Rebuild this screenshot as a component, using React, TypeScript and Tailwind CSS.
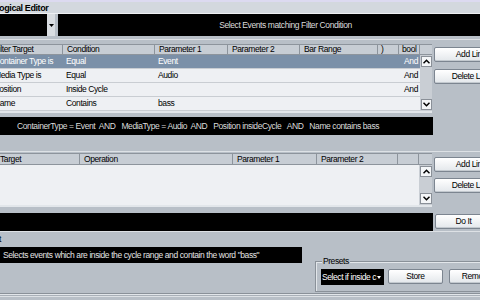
import React from "react";

const filterRows = [
  { target: "Container Type is", cond: "Equal", p1: "Event", bool: "And", selected: true },
  { target: "Media Type is", cond: "Equal", p1: "Audio", bool: "And" },
  { target: "Position", cond: "Inside Cycle", p1: "", bool: "And" },
  { target: "Name", cond: "Contains", p1: "bass", bool: "" },
];

function Chevron({ up }: { up?: boolean }) {
  return (
    <svg width="7" height="5" viewBox="0 0 7 5">
      <polyline
        points={up ? "0.5,4.2 3.5,1.2 6.5,4.2" : "0.5,0.8 3.5,3.8 6.5,0.8"}
        fill="none"
        stroke="#000"
        strokeWidth="1.5"
      />
    </svg>
  );
}

function ScrollBar() {
  return (
    <div className="flex h-full w-full flex-col justify-between bg-[#c9ced4] py-[1px] pl-[1px]">
      <div className="flex h-[11px] items-center justify-center border border-[#8a9098] bg-[#f4f6f8]">
        <Chevron up />
      </div>
      <div className="flex h-[11px] items-center justify-center border border-[#8a9098] bg-[#f4f6f8]">
        <Chevron />
      </div>
    </div>
  );
}

function Button({ label, className }: { label: string; className: string }) {
  return (
    <div
      className={`flex items-center justify-center rounded-[2px] border border-[#7c8590] bg-linear-to-b from-white to-[#e3e7eb] shadow-[inset_0_-1px_0_#c3c9cf] ${className}`}
    >
      {label}
    </div>
  );
}

function HeadCell({ label, w, pl = "pl-[4px]" }: { label: string; w: string; pl?: string }) {
  return (
    <div className={`flex h-full items-center border-r border-[#8d949c] ${w} ${pl} whitespace-nowrap`}>
      {label}
    </div>
  );
}

export default function App() {
  return (
    <div className="h-[300px] w-[480px] overflow-hidden bg-[#b8bfc7] font-['Liberation_Sans',Arial,sans-serif] text-[8.5px] tracking-[-0.4px] text-black">
      <div className="ml-[-7px] flex w-[520px] flex-col">
        {/* title */}
        <div className="h-[2px] bg-[#dcdaf0]" />
        <div className="h-[12px] border-b border-[#eef0f3] bg-[#d3d8de] pl-[1px] text-[9px] font-bold leading-[12px]">
          Logical Editor
        </div>

        {/* function + filter caption */}
        <div className="flex h-[22px] gap-[3px]">
          <div className="flex w-[62px]">
            <div className="w-[54px] bg-black" />
            <div className="flex w-[8px] items-center justify-center bg-[#d9dde1]">
              <svg width="5" height="3" viewBox="0 0 5 3">
                <polygon points="0,0 5,0 2.5,3" fill="#000" />
              </svg>
            </div>
          </div>
          <div className="flex flex-1 items-center justify-center bg-black text-[#dcdcdc]">
            Select Events matching Filter Condition
          </div>
        </div>
        <div className="h-[3px]" />
        <div className="h-[1px] bg-[#dde1e5]" />
        <div className="h-[4px]" />

        {/* filter table */}
        <div className="flex gap-[2px]">
          <div className="flex w-[439px] flex-col border-b-2 border-[#e2e6ea]">
            <div className="flex h-[11px] border-y border-[#8d949c] bg-[#c7cdd4]">
              <HeadCell label="Filter Target" w="w-[70px]" pl="pl-[1px]" />
              <HeadCell label="Condition" w="w-[92px]" />
              <HeadCell label="Parameter 1" w="w-[73px]" />
              <HeadCell label="Parameter 2" w="w-[72px]" />
              <HeadCell label="Bar Range" w="w-[78px]" />
              <HeadCell label=")" w="w-[21px]" pl="pl-[3px]" />
              <HeadCell label="bool" w="w-[21px]" pl="pl-[3px]" />
              <div className="w-[12px]" />
            </div>
            <div className="flex h-[56px]">
              <div className="flex w-[427px] flex-col bg-[#eef0f3]">
                {filterRows.map((r) => (
                  <div
                    key={r.target}
                    className={`flex h-[14px] items-center border-b border-[#c9cdd2] ${
                      r.selected ? "bg-[#7b90a8] text-white" : ""
                    }`}
                  >
                    <div className="w-[70px] pl-[1px] whitespace-nowrap">{r.target}</div>
                    <div className="w-[92px] pl-[3px]">{r.cond}</div>
                    <div className="w-[73px] pl-[3px]">{r.p1}</div>
                    <div className="w-[72px]" />
                    <div className="w-[78px]" />
                    <div className="w-[21px]" />
                    <div className="w-[21px] pr-[2px] text-right">{r.bool}</div>
                  </div>
                ))}
              </div>
              <div className="w-[12px]">
                <ScrollBar />
              </div>
            </div>
          </div>
          <div className="flex flex-1 flex-col pr-[5px]">
            <Button label="Add Line" className="mt-[3px] h-[15px]" />
            <Button label="Delete Line" className="mt-[7px] h-[15px]" />
          </div>
        </div>

        {/* filter expression */}
        <div className="mt-[4px] flex h-[18px] w-[440px] items-center bg-black pl-[24px] whitespace-pre text-[#dcdcdc]">
          {"ContainerType = Event  AND   MediaType = Audio  AND   Position insideCycle   AND   Name contains bass"}
        </div>

        <div className="h-[16px]" />
        <div className="h-[1px] bg-[#dde1e5]" />
        <div className="h-[1px]" />

        {/* action table */}
        <div className="flex gap-[2px]">
          <div className="flex w-[439px] flex-col border-b-2 border-[#e2e6ea]">
            <div className="flex h-[12px] border-y border-[#8d949c] bg-[#c7cdd4]">
              <HeadCell label="Target" w="w-[87px]" pl="pl-[7px]" />
              <HeadCell label="Operation" w="w-[153px]" />
              <HeadCell label="Parameter 1" w="w-[84px]" />
              <HeadCell label="Parameter 2" w="w-[81px]" />
              <HeadCell label="" w="w-[21px]" />
              <div className="w-[13px]" />
            </div>
            <div className="flex h-[40px]">
              <div className="w-[426px] bg-[#eef0f3]" />
              <div className="w-[13px]">
                <ScrollBar />
              </div>
            </div>
          </div>
          <div className="flex flex-1 flex-col pr-[5px]">
            <Button label="Add Line" className="mt-[4px] h-[15px]" />
            <Button label="Delete Line" className="mt-[6px] h-[15px]" />
          </div>
        </div>

        {/* action bar */}
        <div className="mt-[6px] flex h-[18px] gap-[2px]">
          <div className="w-[440px] bg-black" />
          <Button label="Do It" className="mt-[1px] h-[15px] w-[57px]" />
        </div>
        <div className="h-[1px] bg-[#dde1e5]" />

        {/* description + presets */}
        <div className="flex items-start">
          <div className="flex w-[312px] flex-col">
            <div className="flex h-[15px] items-center pl-[6px]">t</div>
            <div className="flex h-[16px] items-center bg-black pl-[10px] whitespace-nowrap text-[#e4e4e4]">
              Selects events which are inside the cycle range and contain the word "bass"
            </div>
          </div>
          <div className="ml-[13px] mt-[29px] flex w-[200px] flex-col border border-[#8a9199] pb-[6px] pl-[5px] shadow-[inset_1px_1px_0_#e2e6ea]">
            <span className="ml-[1px] -mt-[5px] block w-fit bg-[#b8bfc7] px-[1px] leading-[8px]">Presets</span>
            <div className="mt-[4px] flex h-[16px] gap-[4px]">
              <div className="flex w-[63px] items-center bg-black pl-[1px] whitespace-nowrap text-white">
                Select if inside c
                <svg width="4" height="3" viewBox="0 0 4 3" className="ml-[1px]">
                  <polygon points="0,0 4,0 2,3" fill="#fff" />
                </svg>
              </div>
              <Button label="Store" className="h-[15px] w-[55px] border-[#6d88b0]" />
              <Button label="Remove" className="ml-[2px] h-[15px] w-[55px]" />
            </div>
          </div>
        </div>

        {/* bottom edge */}
        <div className="mt-[1px] h-[1px] bg-[#8a9199]" />
        <div className="h-[1px] bg-[#e2e6ea]" />
        <div className="h-[1px] bg-[#a9b0b8]" />
        <div className="h-[1px] bg-[#dde1e5]" />
      </div>
    </div>
  );
}
